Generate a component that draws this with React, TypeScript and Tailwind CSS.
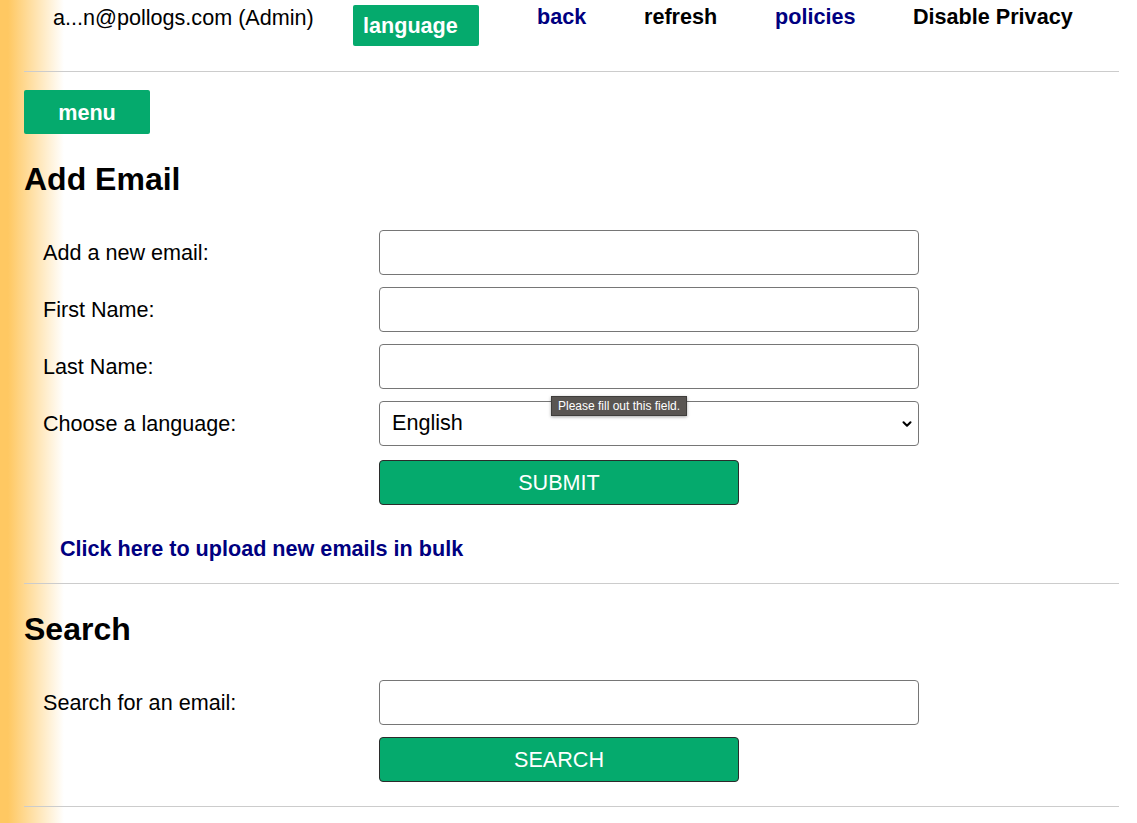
import { ChevronDown } from "lucide-react";

const fieldClass =
	"w-[540px] h-[45px] border border-[#767676] rounded-[4px] bg-white px-3 text-[21.6px] text-black outline-none";

function FormRow({ label, children }: { label: string; children: React.ReactNode }) {
	return (
		<div className="flex items-center">
			<label className="w-[355px] pl-[19px] text-[21.6px] leading-[25px]">{label}</label>
			{children}
		</div>
	);
}

function GreenButton({ text }: { text: string }) {
	return (
		<div className="flex">
			<div className="w-[355px]" />
			<button className="w-[360px] h-[45px] bg-[#05aa6d] border border-[#2b2b2b] rounded-[4px] text-white text-[21.6px] leading-[25px]">
				{text}
			</button>
		</div>
	);
}

export default function App() {
	return (
		<div className="relative min-h-[823px] bg-[linear-gradient(to_right,#ffc862_0px,#ffc862_8px,#ffffff_64px)] font-['Liberation_Sans',Arial,sans-serif] text-black">
			<div className="pl-[24px] pr-[18px]">
				{/* top bar */}
				<div className="flex items-start h-[71px] pl-[29px]">
					<span className="w-[300px] mt-[5px] text-[21.6px] leading-[25px]">a...n@pollogs.com (Admin)</span>
					<button className="w-[126px] h-[41px] mt-[5px] bg-[#05aa6d] rounded-[2px] text-left pl-[10px] text-white font-bold text-[21.6px] leading-[25px]">
						language
					</button>
					<a href="#" className="ml-[58px] w-[107px] mt-[4px] text-[21.6px] leading-[25px] font-bold text-[#000080]">back</a>
					<a href="#" className="w-[131px] mt-[4px] text-[21.6px] leading-[25px] font-bold">refresh</a>
					<a href="#" className="w-[138px] mt-[4px] text-[21.6px] leading-[25px] font-bold text-[#000080]">policies</a>
					<a href="#" className="mt-[4px] text-[21.6px] leading-[25px] font-bold">Disable Privacy</a>
				</div>
				<hr className="border-t border-[#cccccc]" />

				<button className="mt-[18px] w-[126px] h-[44px] bg-[#05aa6d] rounded-[2px] text-white font-bold text-[21.6px] leading-[25px]">
					menu
				</button>

				<h2 className="mt-[27px] text-[32px] leading-[36px] font-bold">Add Email</h2>

				<div className="mt-[33px] flex flex-col gap-[12px]">
					<FormRow label="Add a new email:">
						<input className={fieldClass} />
					</FormRow>
					<FormRow label="First Name:">
						<input className={fieldClass} />
					</FormRow>
					<FormRow label="Last Name:">
						<input className={fieldClass} />
					</FormRow>
					<FormRow label="Choose a language:">
						<div className="relative">
							<select className={fieldClass + " appearance-none"} defaultValue="English">
								<option>English</option>
							</select>
							<ChevronDown className="absolute right-[5px] top-[16px] w-[14px] h-[14px] pointer-events-none" strokeWidth={3.5} />
						</div>
					</FormRow>
				</div>

				<div className="mt-[14px]">
					<GreenButton text="SUBMIT" />
				</div>

				<a href="#" className="block mt-[31px] ml-[36px] text-[21.6px] leading-[25px] font-bold text-[#000080]">
					Click here to upload new emails in bulk
				</a>

				<hr className="mt-[22px] border-t border-[#cccccc]" />

				<h2 className="mt-[27px] text-[32px] leading-[36px] font-bold">Search</h2>

				<div className="mt-[33px]">
					<FormRow label="Search for an email:">
						<input className={fieldClass} />
					</FormRow>
				</div>

				<div className="mt-[12px]">
					<GreenButton text="SEARCH" />
				</div>

				<hr className="mt-[24px] border-t border-[#cccccc]" />
			</div>

			{/* validation bubble */}
			<div className="absolute left-[551px] top-[396px] h-[20px] px-[6px] bg-[#595552] border border-[#3f3d3b] shadow-[0_1px_3px_rgba(0,0,0,0.35)] text-white text-[12px] leading-[18px] font-['Liberation_Sans',Arial,sans-serif]">
				Please fill out this field.
			</div>
		</div>
	);
}
